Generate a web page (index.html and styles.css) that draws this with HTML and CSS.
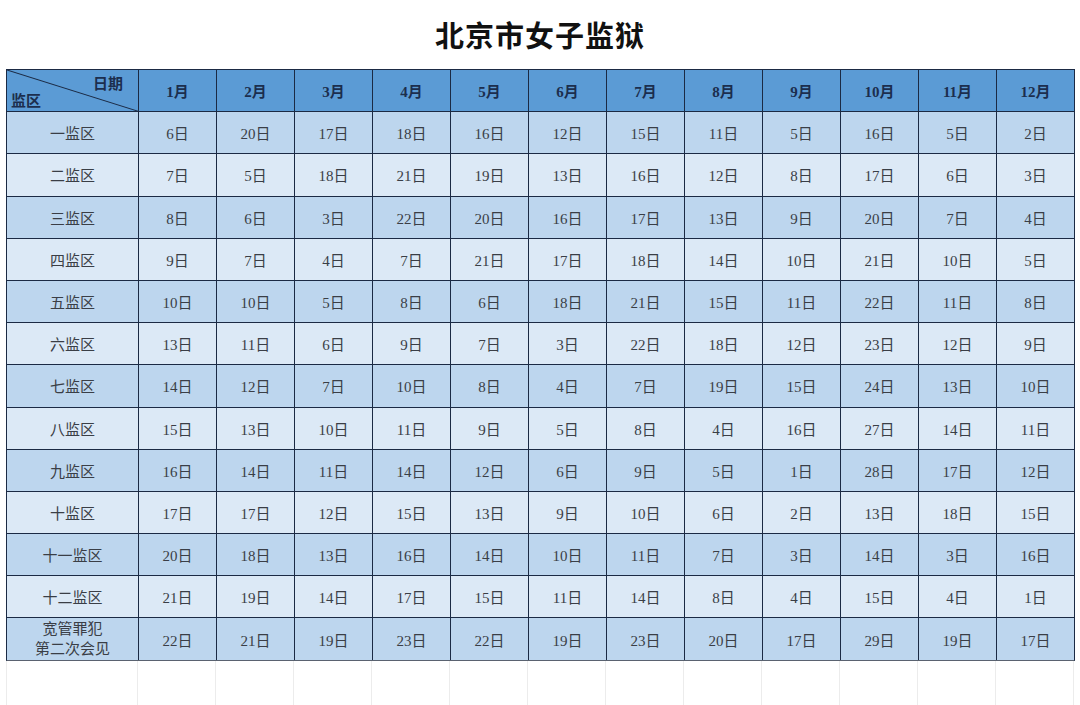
FILE: index.html
```html
<!DOCTYPE html>
<html lang="zh">
<head>
<meta charset="utf-8">
<link rel="stylesheet" href="styles.css">
</head>
<body>
<h1 class="title">北京市女子监狱</h1>
<div class="sheet">
  <div class="cell head corner">
    <svg class="diag" viewBox="0 0 131 41" preserveAspectRatio="none"><line x1="0" y1="0" x2="131" y2="41" stroke="#1b2a44" stroke-width="1"/></svg>
    <span class="c-date">日期</span>
    <span class="c-zone">监区</span>
  </div>
  <div class="cell head">1月</div><div class="cell head">2月</div><div class="cell head">3月</div><div class="cell head">4月</div><div class="cell head">5月</div><div class="cell head">6月</div><div class="cell head">7月</div><div class="cell head">8月</div><div class="cell head">9月</div><div class="cell head">10月</div><div class="cell head">11月</div><div class="cell head">12月</div>

  <div class="cell odd">一监区</div><div class="cell odd">6日</div><div class="cell odd">20日</div><div class="cell odd">17日</div><div class="cell odd">18日</div><div class="cell odd">16日</div><div class="cell odd">12日</div><div class="cell odd">15日</div><div class="cell odd">11日</div><div class="cell odd">5日</div><div class="cell odd">16日</div><div class="cell odd">5日</div><div class="cell odd">2日</div>
  <div class="cell even">二监区</div><div class="cell even">7日</div><div class="cell even">5日</div><div class="cell even">18日</div><div class="cell even">21日</div><div class="cell even">19日</div><div class="cell even">13日</div><div class="cell even">16日</div><div class="cell even">12日</div><div class="cell even">8日</div><div class="cell even">17日</div><div class="cell even">6日</div><div class="cell even">3日</div>
  <div class="cell odd">三监区</div><div class="cell odd">8日</div><div class="cell odd">6日</div><div class="cell odd">3日</div><div class="cell odd">22日</div><div class="cell odd">20日</div><div class="cell odd">16日</div><div class="cell odd">17日</div><div class="cell odd">13日</div><div class="cell odd">9日</div><div class="cell odd">20日</div><div class="cell odd">7日</div><div class="cell odd">4日</div>
  <div class="cell even">四监区</div><div class="cell even">9日</div><div class="cell even">7日</div><div class="cell even">4日</div><div class="cell even">7日</div><div class="cell even">21日</div><div class="cell even">17日</div><div class="cell even">18日</div><div class="cell even">14日</div><div class="cell even">10日</div><div class="cell even">21日</div><div class="cell even">10日</div><div class="cell even">5日</div>
  <div class="cell odd">五监区</div><div class="cell odd">10日</div><div class="cell odd">10日</div><div class="cell odd">5日</div><div class="cell odd">8日</div><div class="cell odd">6日</div><div class="cell odd">18日</div><div class="cell odd">21日</div><div class="cell odd">15日</div><div class="cell odd">11日</div><div class="cell odd">22日</div><div class="cell odd">11日</div><div class="cell odd">8日</div>
  <div class="cell even">六监区</div><div class="cell even">13日</div><div class="cell even">11日</div><div class="cell even">6日</div><div class="cell even">9日</div><div class="cell even">7日</div><div class="cell even">3日</div><div class="cell even">22日</div><div class="cell even">18日</div><div class="cell even">12日</div><div class="cell even">23日</div><div class="cell even">12日</div><div class="cell even">9日</div>
  <div class="cell odd">七监区</div><div class="cell odd">14日</div><div class="cell odd">12日</div><div class="cell odd">7日</div><div class="cell odd">10日</div><div class="cell odd">8日</div><div class="cell odd">4日</div><div class="cell odd">7日</div><div class="cell odd">19日</div><div class="cell odd">15日</div><div class="cell odd">24日</div><div class="cell odd">13日</div><div class="cell odd">10日</div>
  <div class="cell even">八监区</div><div class="cell even">15日</div><div class="cell even">13日</div><div class="cell even">10日</div><div class="cell even">11日</div><div class="cell even">9日</div><div class="cell even">5日</div><div class="cell even">8日</div><div class="cell even">4日</div><div class="cell even">16日</div><div class="cell even">27日</div><div class="cell even">14日</div><div class="cell even">11日</div>
  <div class="cell odd">九监区</div><div class="cell odd">16日</div><div class="cell odd">14日</div><div class="cell odd">11日</div><div class="cell odd">14日</div><div class="cell odd">12日</div><div class="cell odd">6日</div><div class="cell odd">9日</div><div class="cell odd">5日</div><div class="cell odd">1日</div><div class="cell odd">28日</div><div class="cell odd">17日</div><div class="cell odd">12日</div>
  <div class="cell even">十监区</div><div class="cell even">17日</div><div class="cell even">17日</div><div class="cell even">12日</div><div class="cell even">15日</div><div class="cell even">13日</div><div class="cell even">9日</div><div class="cell even">10日</div><div class="cell even">6日</div><div class="cell even">2日</div><div class="cell even">13日</div><div class="cell even">18日</div><div class="cell even">15日</div>
  <div class="cell odd">十一监区</div><div class="cell odd">20日</div><div class="cell odd">18日</div><div class="cell odd">13日</div><div class="cell odd">16日</div><div class="cell odd">14日</div><div class="cell odd">10日</div><div class="cell odd">11日</div><div class="cell odd">7日</div><div class="cell odd">3日</div><div class="cell odd">14日</div><div class="cell odd">3日</div><div class="cell odd">16日</div>
  <div class="cell even">十二监区</div><div class="cell even">21日</div><div class="cell even">19日</div><div class="cell even">14日</div><div class="cell even">17日</div><div class="cell even">15日</div><div class="cell even">11日</div><div class="cell even">14日</div><div class="cell even">8日</div><div class="cell even">4日</div><div class="cell even">15日</div><div class="cell even">4日</div><div class="cell even">1日</div>
  <div class="cell odd two">宽管罪犯<br>第二次会见</div><div class="cell odd">22日</div><div class="cell odd">21日</div><div class="cell odd">19日</div><div class="cell odd">23日</div><div class="cell odd">22日</div><div class="cell odd">19日</div><div class="cell odd">23日</div><div class="cell odd">20日</div><div class="cell odd">17日</div><div class="cell odd">29日</div><div class="cell odd">19日</div><div class="cell odd">17日</div>
</div>
<div class="blank">
  <div></div><div></div><div></div><div></div><div></div><div></div><div></div><div></div><div></div><div></div><div></div><div></div><div></div>
</div>
</body>
</html>
```

FILE: styles.css
```css
html, body {
  margin: 0;
  padding: 0;
  background: #ffffff;
}
body {
  width: 1080px;
  height: 705px;
  overflow: hidden;
  font-family: "Liberation Serif", "Noto Sans CJK SC", serif;
}
.title {
  margin: 0;
  height: 69px;
  box-sizing: border-box;
  padding-top: 17px;
  text-align: center;
  font-size: 29px;
  line-height: 40px;
  font-weight: 700;
  color: #111111;
  font-family: "Liberation Serif", "Noto Sans CJK SC", serif;
  letter-spacing: 1px;
}
.sheet {
  margin-left: 6px;
  width: 1069px;
  display: grid;
  grid-template-columns: 131px repeat(12, 77px);
  grid-template-rows: repeat(14, 41.2px);
  gap: 1px;
  background: #1b2a44;
  border: 1px solid #1b2a44;
  border-bottom-color: #5a6270;
  box-sizing: border-box;
}
.cell {
  display: flex;
  align-items: center;
  justify-content: center;
  font-size: 15px;
  color: #3a3e46;
  text-align: center;
}
.head {
  background: #5b9bd5;
  color: #1c2e4e;
  font-weight: 700;
}
.odd {
  background: #bdd6ee;
}
.even {
  background: #dce9f6;
}
.two {
  line-height: 20px;
  font-size: 15px;
}
.corner {
  position: relative;
  font-size: 15px;
}
.diag {
  position: absolute;
  left: 0;
  top: 0;
  width: 100%;
  height: 100%;
}
.c-date {
  position: absolute;
  right: 15px;
  top: 2px;
}
.c-zone {
  position: absolute;
  left: 4px;
  bottom: 1px;
}
.blank {
  margin-left: 6px;
  width: 1069px;
  height: 46px;
  display: grid;
  grid-template-columns: 131px repeat(12, 78px);
  border-left: 1px solid #ececec;
  box-sizing: border-box;
}
.blank div {
  border-right: 1px solid #ececec;
}
```
